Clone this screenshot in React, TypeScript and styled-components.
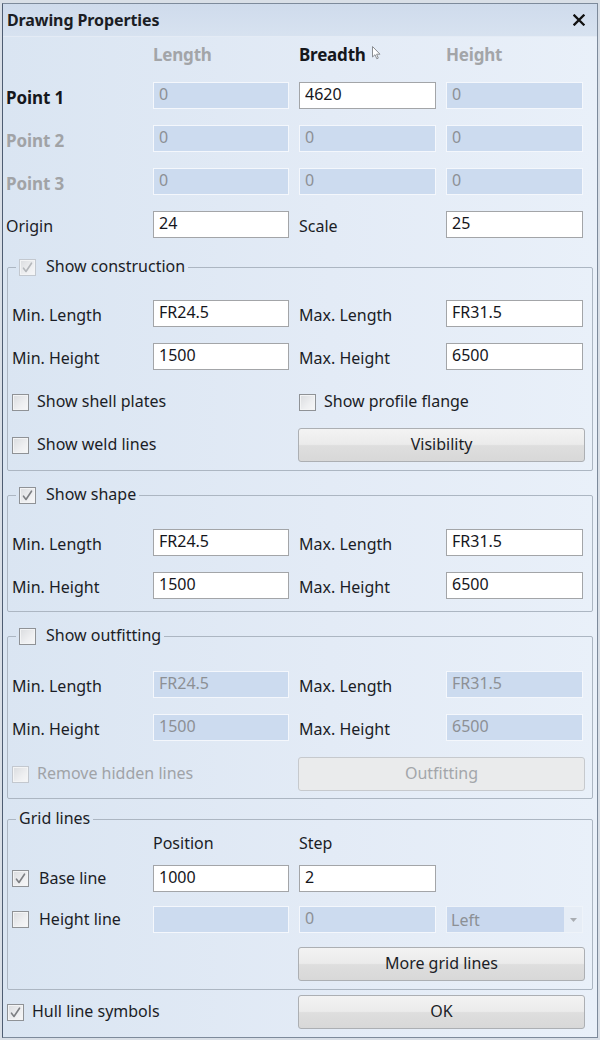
import React from 'react';
import styled, { createGlobalStyle } from 'styled-components';

const Global = createGlobalStyle`
  html, body { margin: 0; padding: 0; background: #d9dfe7; }
  body { font-family: "Noto Sans", "Open Sans", sans-serif; }
  #root { width: 600px; height: 1040px; }
  * { box-sizing: border-box; }
`;

const Page = styled.div`
  width: 600px;
  height: 1040px;
  padding: 3px 2px 2px 2px;
  background: #d9dfe7;
`;

const Window = styled.div`
  height: 100%;
  display: flex;
  flex-direction: column;
  border: 1px solid #7d8a9b;
  border-left-color: #4e5d72;
  background: linear-gradient(to right, #dae5f2 0%, #e3ebf6 55%, #e9f0f9 100%);
`;

const TitleBar = styled.div`
  height: 33px;
  flex: none;
  display: flex;
  align-items: center;
  justify-content: space-between;
  padding: 0 12px 0 4px;
  background: linear-gradient(to bottom, #cfdbec, #d7e2f0);
  border-bottom: 1px solid #e4ebf5;
`;

const Title = styled.span`
  font-size: 16px;
  font-weight: 700;
  color: #1b1d24;
  letter-spacing: -0.1px;
`;

const CloseIcon = styled.svg`
  width: 12px;
  height: 12px;
  display: block;
`;

const Body = styled.div`
  flex: 1;
  display: flex;
  flex-direction: column;
  padding: 5px 0 7px 0;
`;

const TopGrid = styled.div`
  display: grid;
  grid-template-columns: 137px 136px 137px 137px;
  grid-template-rows: 24px repeat(4, 27px);
  column-gap: 10px;
  row-gap: 16px;
  align-items: center;
  padding-left: 3px;
`;

const Head = styled.span<{ $muted?: boolean }>`
  display: flex;
  align-items: flex-start;
  font-size: 17px;
  font-weight: 700;
  color: ${p => (p.$muted ? '#a3a5a8' : '#15171c')};
  letter-spacing: -0.2px;
`;

const Cursor = styled.svg`
  width: 9px;
  height: 14px;
  margin: 3px 0 0 6px;
  flex: none;
`;

const PointLabel = styled.span<{ $muted?: boolean }>`
  font-size: 17px;
  font-weight: 700;
  color: ${p => (p.$muted ? '#a1a3a6' : '#15171c')};
  padding-top: 3px;
  letter-spacing: -0.1px;
`;

const Label = styled.span<{ $muted?: boolean }>`
  font-size: 16px;
  color: ${p => (p.$muted ? '#a0a3a7' : '#1b1d26')};
  padding-top: 3px;
  white-space: nowrap;
`;

const Field = styled.input<{ $off?: boolean }>`
  width: 100%;
  height: 27px;
  margin: 0;
  padding: 0 5px 3px;
  font-family: "Noto Sans", "Open Sans", sans-serif;
  font-size: 16px;
  color: ${p => (p.$off ? '#8c9095' : '#15161c')};
  background: ${p => (p.$off ? '#ccdbef' : '#ffffff')};
  border: 1px solid ${p => (p.$off ? '#f4f7fc' : '#a3a5a8')};
  border-radius: 0;
  outline: none;
`;

const Select = styled.div`
  height: 27px;
  display: flex;
  align-items: stretch;
  background: #c9d8ee;
  border: 1px solid #eef3f9;
`;

const SelectText = styled.span`
  flex: 1;
  padding: 1px 4px 0;
  font-size: 16px;
  color: #8c9095;
  display: flex;
  align-items: center;
`;

const SelectArrow = styled.span`
  width: 18px;
  flex: none;
  background: #e6edf6;
  display: flex;
  align-items: center;
  justify-content: center;
`;

const Group = styled.fieldset<{ $mt: number; $pt: number; $pb: number }>`
  margin: ${p => p.$mt}px 4px 0 4px;
  padding: ${p => p.$pt}px 9px ${p => p.$pb}px 4px;
  border: 1px solid #acb6c2;
  border-radius: 2px;
  min-width: 0;
`;

const Legend = styled.legend`
  display: flex;
  align-items: center;
  gap: 10px;
  height: 20px;
  padding: 0 3px;
  margin-left: 4px;
  font-size: 16px;
  color: #1b1d26;
`;

const LegendText = styled.span`
  margin-top: -3px;
`;

const GroupGrid = styled.div<{ $rows: string; $gap?: number }>`
  display: grid;
  grid-template-columns: 131px 136px 137px 137px;
  grid-template-rows: ${p => p.$rows};
  column-gap: 10px;
  row-gap: ${p => p.$gap ?? 16}px;
  align-items: center;
`;

const CheckItem = styled.label<{
  $span?: number;
  $start?: number;
  $muted?: boolean;
  $gap?: number;
  $low?: boolean;
}>`
  display: flex;
  align-items: center;
  align-self: ${p => (p.$low ? 'end' : 'center')};
  gap: ${p => p.$gap ?? 8}px;
  grid-column: ${p => (p.$start ? `${p.$start} / span ${p.$span ?? 2}` : `span ${p.$span ?? 2}`)};
  font-size: 16px;
  color: ${p => (p.$muted ? '#a0a3a7' : '#1b1d26')};
  white-space: nowrap;
`;

const CheckText = styled.span`
  margin-top: -2px;
`;

const Box = styled.span<{ $faint?: boolean }>`
  width: 17px;
  height: 17px;
  flex: none;
  display: flex;
  align-items: center;
  justify-content: center;
  border: 1px solid ${p => (p.$faint ? '#c3c8cf' : '#8f9296')};
  background: linear-gradient(135deg, #dadcdf 0%, #eeeff1 60%, #f7f7f8 100%);
  box-shadow: inset 0 0 0 1px #f3f4f5;
`;

const Button = styled.button<{ $off?: boolean }>`
  grid-column: 3 / span 2;
  height: 34px;
  margin: 0 -2px 0 -1px;
  font-family: "Noto Sans", "Open Sans", sans-serif;
  font-size: 16px;
  color: ${p => (p.$off ? '#a3a6aa' : '#1b1d26')};
  border: 1px solid ${p => (p.$off ? '#c6c9cd' : '#acafb3')};
  border-radius: 3px;
  background: ${p =>
    p.$off
      ? '#eaebec'
      : 'linear-gradient(to bottom, #f3f3f3 0%, #ebebeb 48%, #dedede 52%, #d8d8d8 100%)'};
  padding: 0 0 3px;
`;

const Footer = styled.div`
  display: flex;
  align-items: center;
  justify-content: space-between;
  margin-top: 5px;
  padding: 0 12px 0 4px;
`;

const FooterButton = styled(Button)`
  width: 287px;
  margin: 0;
`;

const Empty = styled.span``;

function Check({ checked, faint, shade = '#7d7f83' }: { checked?: boolean; faint?: boolean; shade?: string }) {
  return (
    <Box $faint={faint}>
      {checked && (
        <svg width="13" height="13" viewBox="0 0 13 13">
          <path d="M2.5 7.2 L5 10.5 L10.5 2.2" fill="none" stroke={shade} strokeWidth="1.6" strokeLinejoin="round" strokeLinecap="round" />
        </svg>
      )}
    </Box>
  );
}

export default function App() {
  return (
    <>
      <Global />
      <Page>
        <Window>
          <TitleBar>
            <Title>Drawing Properties</Title>
            <CloseIcon viewBox="0 0 12 12">
              <path d="M1.5 1.5 L10.5 10.5 M10.5 1.5 L1.5 10.5" stroke="#111" strokeWidth="2.3" strokeLinecap="square" />
            </CloseIcon>
          </TitleBar>
          <Body>
            <TopGrid>
              <Empty />
              <Head $muted>Length</Head>
              <Head>
                Breadth
                <Cursor viewBox="0 0 9 14">
                  <path d="M0.5 0.5 L0.5 11 L3 8.7 L4.8 12.8 L6.3 12.1 L4.6 8.2 L8 8.2 Z" fill="#fff" stroke="#8a8d92" strokeWidth="1" strokeLinejoin="round" />
                </Cursor>
              </Head>
              <Head $muted>Height</Head>

              <PointLabel>Point 1</PointLabel>
              <Field $off readOnly value="0" />
              <Field readOnly value="4620" />
              <Field $off readOnly value="0" />

              <PointLabel $muted>Point 2</PointLabel>
              <Field $off readOnly value="0" />
              <Field $off readOnly value="0" />
              <Field $off readOnly value="0" />

              <PointLabel $muted>Point 3</PointLabel>
              <Field $off readOnly value="0" />
              <Field $off readOnly value="0" />
              <Field $off readOnly value="0" />

              <Label>Origin</Label>
              <Field readOnly value="24" />
              <Label>Scale</Label>
              <Field readOnly value="25" />
            </TopGrid>

            <Group $mt={19} $pt={23} $pb={8}>
              <Legend>
                <Check checked faint shade="#b4b7bb" />
                <LegendText>Show construction</LegendText>
              </Legend>
              <GroupGrid $rows="27px 27px 26px 34px">
                <Label>Min. Length</Label>
                <Field readOnly value="FR24.5" />
                <Label>Max. Length</Label>
                <Field readOnly value="FR31.5" />

                <Label>Min. Height</Label>
                <Field readOnly value="1500" />
                <Label>Max. Height</Label>
                <Field readOnly value="6500" />

                <CheckItem $low>
                  <Check />
                  <CheckText>Show shell plates</CheckText>
                </CheckItem>
                <CheckItem $start={3} $low>
                  <Check />
                  <CheckText>Show profile flange</CheckText>
                </CheckItem>

                <CheckItem>
                  <Check />
                  <CheckText>Show weld lines</CheckText>
                </CheckItem>
                <Button>Visibility</Button>
              </GroupGrid>
            </Group>

            <Group $mt={14} $pt={24} $pb={12}>
              <Legend>
                <Check checked />
                <LegendText>Show shape</LegendText>
              </Legend>
              <GroupGrid $rows="27px 27px">
                <Label>Min. Length</Label>
                <Field readOnly value="FR24.5" />
                <Label>Max. Length</Label>
                <Field readOnly value="FR31.5" />

                <Label>Min. Height</Label>
                <Field readOnly value="1500" />
                <Label>Max. Height</Label>
                <Field readOnly value="6500" />
              </GroupGrid>
            </Group>

            <Group $mt={14} $pt={25} $pb={7}>
              <Legend>
                <Check />
                <LegendText>Show outfitting</LegendText>
              </Legend>
              <GroupGrid $rows="27px 27px 34px">
                <Label>Min. Length</Label>
                <Field $off readOnly value="FR24.5" />
                <Label>Max. Length</Label>
                <Field $off readOnly value="FR31.5" />

                <Label>Min. Height</Label>
                <Field $off readOnly value="1500" />
                <Label>Max. Height</Label>
                <Field $off readOnly value="6500" />

                <CheckItem $muted>
                  <Check faint />
                  <CheckText>Remove hidden lines</CheckText>
                </CheckItem>
                <Button $off>Outfitting</Button>
              </GroupGrid>
            </Group>

            <Group $mt={10} $pt={3} $pb={8}>
              <Legend>
                <LegendText>Grid lines</LegendText>
              </Legend>
              <GroupGrid $rows="19px 27px 27px 34px" $gap={14}>
                <Empty />
                <Label>Position</Label>
                <Label>Step</Label>
                <Empty />

                <CheckItem $span={1} $gap={10}>
                  <Check checked />
                  <CheckText>Base line</CheckText>
                </CheckItem>
                <Field readOnly value="1000" />
                <Field readOnly value="2" />
                <Empty />

                <CheckItem $span={1} $gap={10}>
                  <Check />
                  <CheckText>Height line</CheckText>
                </CheckItem>
                <Field $off readOnly value="" />
                <Field $off readOnly value="0" />
                <Select>
                  <SelectText>Left</SelectText>
                  <SelectArrow>
                    <svg width="7" height="4" viewBox="0 0 7 4">
                      <path d="M0 0 L7 0 L3.5 4 Z" fill="#a9adb2" />
                    </svg>
                  </SelectArrow>
                </Select>

                <Button>More grid lines</Button>
              </GroupGrid>
            </Group>

            <Footer>
              <CheckItem $span={1}>
                <Check checked />
                <CheckText>Hull line symbols</CheckText>
              </CheckItem>
              <FooterButton>OK</FooterButton>
            </Footer>
          </Body>
        </Window>
      </Page>
    </>
  );
}
